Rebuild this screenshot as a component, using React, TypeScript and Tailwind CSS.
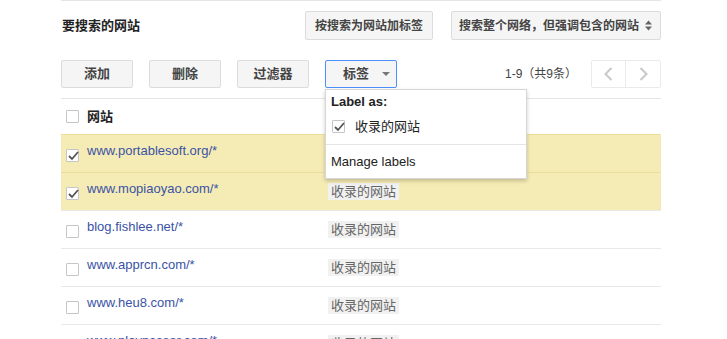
import React from 'react';

const font = { fontFamily: '"Liberation Sans", Arial, "Noto Sans CJK SC", sans-serif' };

type Site = { url: string; checked: boolean; label: boolean };

const sites: Site[] = [
  { url: 'www.portablesoft.org/*', checked: true, label: false },
  { url: 'www.mopiaoyao.com/*', checked: true, label: true },
  { url: 'blog.fishlee.net/*', checked: false, label: true },
  { url: 'www.apprcn.com/*', checked: false, label: true },
  { url: 'www.heu8.com/*', checked: false, label: true },
  { url: 'www.playpcesor.com/*', checked: false, label: true },
];

function Checkbox({ checked }: { checked?: boolean }) {
  return (
    <div className="relative w-[13px] h-[13px] shrink-0 border border-[#c6c6c6] rounded-[1px] bg-white">
      {checked && (
        <svg className="absolute -left-[1px] -top-[2px]" width="15" height="15" viewBox="0 0 15 15">
          <path d="M3 8 L6 11 L12 4" fill="none" stroke="#555" strokeWidth="1.8" />
        </svg>
      )}
    </div>
  );
}

function Btn({ children, className = '' }: { children: React.ReactNode; className?: string }) {
  return (
    <div
      className={`h-[28px] flex items-center justify-center whitespace-nowrap bg-[#f5f5f5] border border-[#dcdcdc] rounded-[2px] font-bold text-[#444] ${className}`}
    >
      {children}
    </div>
  );
}

export default function App() {
  return (
    <div className="w-[727px] h-[339px] overflow-hidden bg-white" style={font}>
      <div className="relative w-[600px] ml-[61px] border-t border-[#e5e5e5]">
        {/* 标题行 */}
        <div className="flex items-center mt-[10px] h-[29px]">
          <div className="text-[13px] font-bold text-[#222] pl-[1px]">要搜索的网站</div>
          <Btn className="ml-auto w-[128px] h-[29px] text-[12px]">按搜索为网站加标签</Btn>
          <Btn className="ml-[18px] w-[210px] h-[29px] text-[12px] justify-start pl-[7px]">
            <span>搜索整个网络，但强调包含的网站</span>
            <svg className="ml-[6px]" width="7" height="11" viewBox="0 0 7 11">
              <path d="M0 4.5 L3.5 0.5 L7 4.5 Z M0 6.5 L3.5 10.5 L7 6.5 Z" fill="#666" />
            </svg>
          </Btn>
        </div>

        {/* 工具栏 */}
        <div className="flex items-center mt-[20px] h-[28px] gap-[16px]">
          <Btn className="w-[72px] text-[13px]">添加</Btn>
          <Btn className="w-[72px] text-[13px]">删除</Btn>
          <Btn className="w-[72px] text-[13px]">过滤器</Btn>
          <div className="relative">
            <div className="w-[72px] h-[28px] flex items-center bg-[#f5f5f5] border border-[#4d90fe] rounded-[2px] text-[13px] font-bold text-[#444] pl-[17px]">
              标签
              <svg className="ml-[13px]" width="8" height="4" viewBox="0 0 8 4">
                <path d="M0 0 L8 0 L4 4 Z" fill="#777" />
              </svg>
            </div>
            {/* 下拉菜单 */}
            <div className="absolute left-0 top-[29px] w-[202px] h-[90px] z-10 bg-white border border-[#d6d6d6] shadow-[0_2px_4px_rgba(0,0,0,0.2)] text-[13px] text-[#222]">
              <div className="font-bold pl-[5px] pt-[4px] leading-[15px]">Label as:</div>
              <div className="flex items-center pl-[6px] mt-[11px] h-[13px]">
                <Checkbox checked />
                <span className="ml-[10px]">收录的网站</span>
              </div>
              <div className="border-t border-[#e5e5e5] mt-[11px]" />
              <div className="pl-[5px] pt-[9px] leading-[15px]">Manage labels</div>
            </div>
          </div>
          <div className="ml-auto flex items-center">
            <span className="text-[12px] text-[#444] mr-[14px]">1-9（共9条）</span>
            <div className="flex h-[28px] border border-[#eaeaea] rounded-[2px]">
              <div className="w-[34px] flex items-center justify-center border-r border-[#eaeaea]">
                <svg width="9" height="14" viewBox="0 0 9 14">
                  <path d="M7.5 1 L1.5 7 L7.5 13" fill="none" stroke="#c8c8c8" strokeWidth="2" />
                </svg>
              </div>
              <div className="w-[34px] flex items-center justify-center">
                <svg width="9" height="14" viewBox="0 0 9 14">
                  <path d="M1.5 1 L7.5 7 L1.5 13" fill="none" stroke="#c8c8c8" strokeWidth="2" />
                </svg>
              </div>
            </div>
          </div>
        </div>

        {/* 表格 */}
        <div className="mt-[10px] border-t border-[#e5e5e5]">
          <div className="flex items-center h-[35px] pl-[5px]">
            <Checkbox />
            <span className="ml-[8px] text-[13px] font-bold text-[#222]">网站</span>
          </div>
          {sites.map((s) => (
            <div
              key={s.url}
              className={`flex items-start h-[38px] pt-[8px] pl-[5px] border-t ${
                s.checked ? 'bg-[#f5ebb4] border-[#ebdd9c]' : 'bg-white border-[#e8e8e8]'
              }`}
            >
              <div className="mt-[6px]">
                <Checkbox checked={s.checked} />
              </div>
              <span className="ml-[8px] w-[241px] text-[13px] leading-[15px] text-[#3a53a6]">{s.url}</span>
              {s.label && (
                <span className="mt-[2px] h-[17px] px-[3px] flex items-center bg-[#f1f1f1] text-[13px] text-[#666]">
                  收录的网站
                </span>
              )}
            </div>
          ))}
        </div>
      </div>
    </div>
  );
}
